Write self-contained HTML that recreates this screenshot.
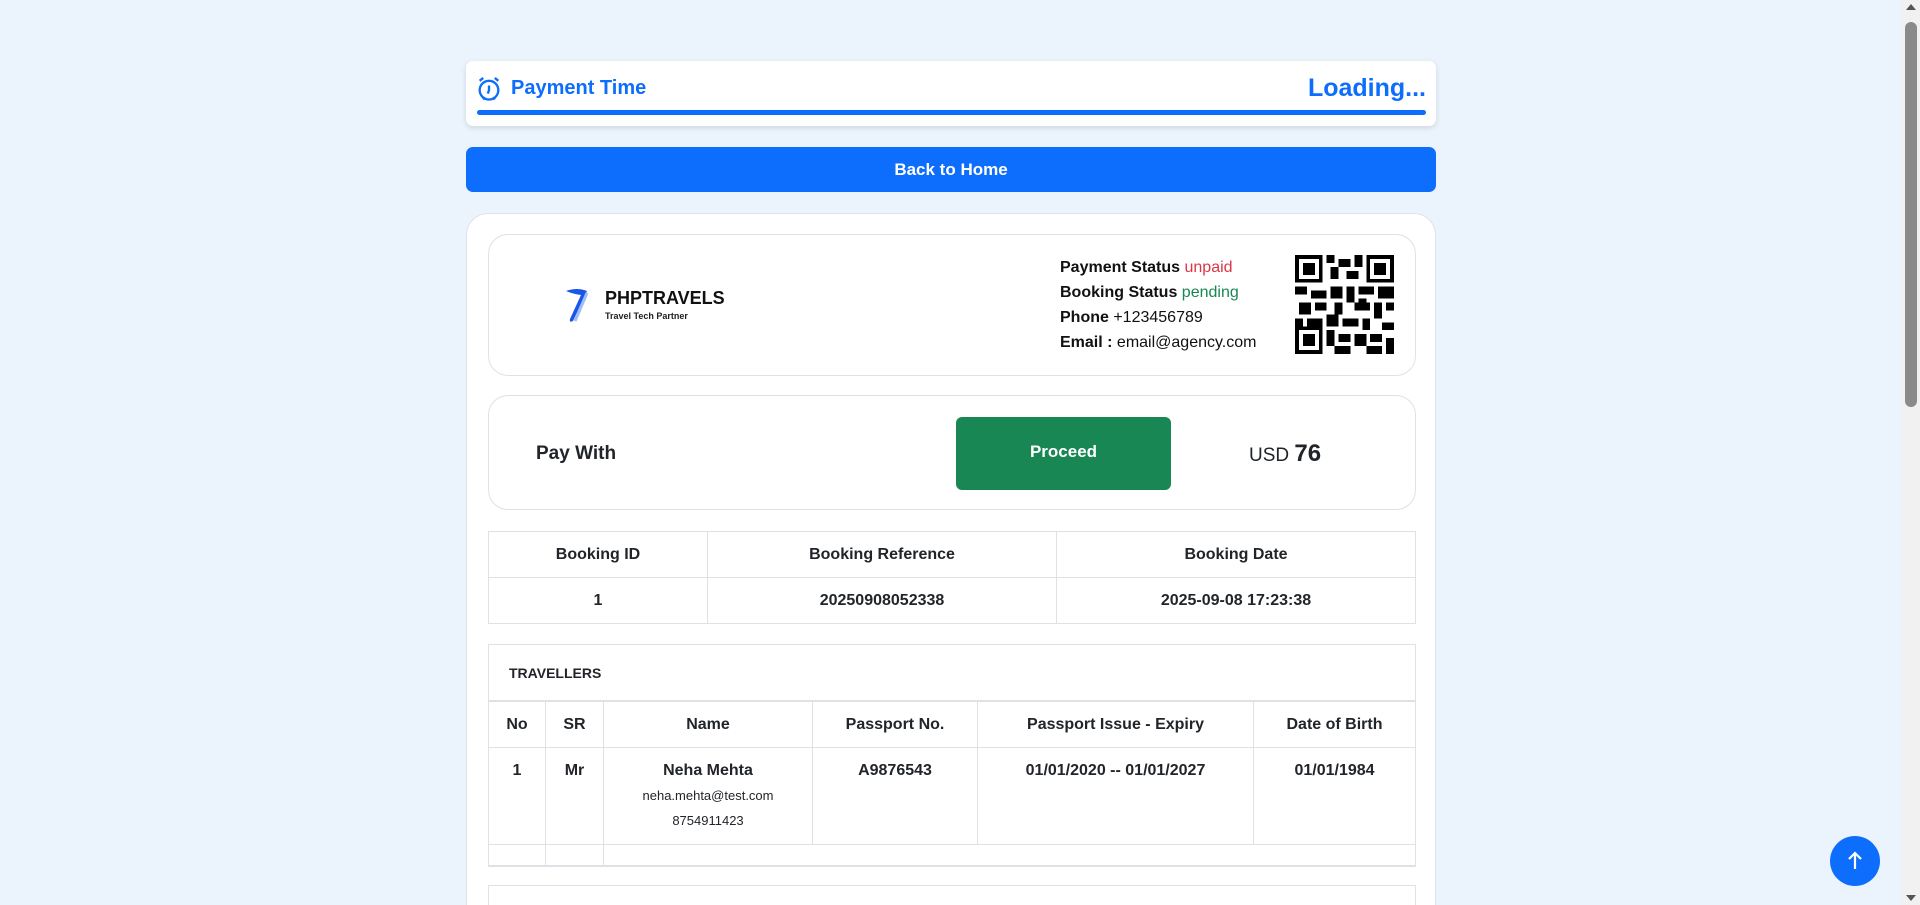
<!DOCTYPE html>
<html><head><meta charset="utf-8"><style>
*{box-sizing:border-box;margin:0;padding:0}
html,body{width:1920px;height:905px;overflow:hidden}
body{background:#ebf3fc;font-family:"Liberation Sans",Arial,sans-serif;color:#212529}
#wrap{position:relative;width:1920px;height:905px;overflow:hidden}
.abs{position:absolute}
.timer{left:466px;top:61px;width:970px;height:65px;background:#fff;border-radius:7px;box-shadow:0 2px 6px rgba(0,0,0,.12)}
.timer .t{left:45px;top:16px;font-size:20px;font-weight:bold;color:#0d6efd}
.timer .l{right:10px;top:13px;font-size:25px;font-weight:bold;color:#0d6efd}
.timer .bar{left:11px;right:10px;top:49px;height:5px;background:#0d6efd;border-radius:3px}
.back{left:466px;top:147px;width:970px;height:45px;background:#0d6efd;border-radius:7px;color:#fff;font-weight:bold;font-size:17px;text-align:center;line-height:45px}
.main{left:466px;top:213px;width:970px;height:760px;background:#fff;border-radius:22px;border:1px solid #dde3ea}
.box{position:absolute;left:21px;width:928px;border:1px solid #dee2e6;border-radius:20px;background:#fff}
table{border-collapse:collapse;width:100%}
td,th{border:1px solid #dee2e6;text-align:center;font-size:16px;font-weight:bold}
</style></head><body><div id="wrap">
<div class="abs timer">
 <svg class="abs" style="left:9px;top:14px" width="28" height="28" viewBox="0 0 24 24" fill="none" stroke="#0d6efd" stroke-width="2"><circle cx="12" cy="13" r="8"/><path d="M12 9v4l-1 3M4 5l3-2.5M20 5l-3-2.5M7 21l1.5-2M17 21l-1.5-2"/></svg>
 <div class="abs t">Payment Time</div><div class="abs l">Loading...</div><div class="abs bar"></div>
</div>
<div class="abs back">Back to Home</div>
<div class="abs main">
 <div class="box" style="top:20px;height:142px">
  <svg class="abs" style="left:74px;top:52px" width="30" height="38" viewBox="0 0 30 38"><path d="M3 4 Q14 0 24 4 L10 34 Q6 36 7 32 L18 8 Q10 7 3 4Z" fill="#1a56e8"/><path d="M12 34 L24 6" stroke="#9ec0f7" stroke-width="3"/></svg>
  <div class="abs" style="left:116px;top:53px;font-size:18px;font-weight:bold;color:#111">PHPTRAVELS</div>
  <div class="abs" style="left:116px;top:76px;font-size:9px;font-weight:bold;color:#222">Travel Tech Partner</div>
  <div class="abs" style="left:571px;top:20px;font-size:16px;line-height:25px;color:#111">
   <div><b>Payment Status</b> <span style="color:#dc3545">unpaid</span></div>
   <div><b>Booking Status</b> <span style="color:#198754">pending</span></div>
   <div><b>Phone</b> +123456789</div>
   <div><b>Email :</b> email@agency.com</div>
  </div>
  <svg class="abs" style="left:806px;top:20px" width="99" height="99" viewBox="0 0 25 25" shape-rendering="crispEdges">
   <g fill="#000"><path d="M0 0h7v7H0zM18 0h7v7h-7zM0 18h7v7H0z"/></g>
   <g fill="#fff"><path d="M1 1h5v5H1zM19 1h5v5h-5zM1 19h5v5H1z"/></g>
   <g fill="#000"><path d="M2 2h3v3H2zM20 2h3v3h-3zM2 20h3v3H2zM8 0h2v2H8zM11 1h3v2h-3zM9 3h2v3H9zM13 4h3v2h-3zM15 0h2v3h-2zM0 8h3v2H0zM4 9h4v2H4zM9 8h3v3H9zM13 8h2v4h-2zM16 8h4v2h-4zM21 8h4v3h-4zM1 12h3v3H1zM5 12h3v2H5zM10 12h2v3h-2zM15 12h4v2h-4zM20 12h2v4h-2zM23 12h2v2h-2zM0 16h2v2H0zM3 16h4v2H3zM8 15h3v3H8zM12 16h4v2h-4zM17 16h2v3h-2zM22 17h3v2h-3zM8 19h2v4H8zM11 20h3v2h-3zM15 20h3v3h-3zM19 20h3v2h-3zM23 21h2v4h-2zM10 23h4v2h-4zM18 23h4v2h-4zM16 11h2v1h-2z"/></g>
  </svg>
 </div>
 <div class="box" style="top:181px;height:115px">
  <div class="abs" style="left:47px;top:47px;font-size:19px;font-weight:bold">Pay With</div>
  <div class="abs" style="left:467px;top:21px;width:215px;height:73px;background:#198754;border-radius:6px;color:#fff;font-weight:bold;font-size:17px;text-align:center;line-height:70px">Proceed</div>
  <div class="abs" style="left:760px;top:44px;font-size:19px">USD <b style="font-size:24px">76</b></div>
 </div>
 <div class="abs" style="left:21px;top:317px;width:928px">
  <table><tr style="height:46px"><td style="width:219px">Booking ID</td><td style="width:349px">Booking Reference</td><td>Booking Date</td></tr>
  <tr style="height:46px"><td>1</td><td>20250908052338</td><td>2025-09-08 17:23:38</td></tr></table>
 </div>
 <div class="abs" style="left:21px;top:430px;width:928px;border:1px solid #dee2e6">
  <div style="height:57px;padding:20px 0 0 20px;font-size:14px;font-weight:bold;border-bottom:2px solid #dee2e6">TRAVELLERS</div>
  <table style="margin:-1px -1px 0 -1px;width:928px"><tr style="height:46px"><td style="width:57px">No</td><td style="width:58px">SR</td><td style="width:209px">Name</td><td style="width:165px">Passport No.</td><td style="width:276px">Passport Issue - Expiry</td><td>Date of Birth</td></tr>
  <tr style="height:97px;vertical-align:top"><td style="padding-top:14px">1</td><td style="padding-top:14px">Mr</td><td style="padding-top:14px">Neha Mehta<div style="font-weight:normal;font-size:13px;margin-top:8px">neha.mehta@test.com</div><div style="font-weight:normal;font-size:13px;margin-top:10px">8754911423</div></td><td style="padding-top:14px">A9876543</td><td style="padding-top:14px">01/01/2020 -- 01/01/2027</td><td style="padding-top:14px">01/01/1984</td></tr>
  <tr style="height:21px"><td></td><td></td><td colspan="4" style="border-right:none"></td></tr></table>
 </div>
 <div class="abs" style="left:21px;top:671px;width:928px;height:60px;border:1px solid #dee2e6"></div>
</div>
<div class="abs" style="left:1902px;top:0;width:18px;height:905px;background:#f1f1f1"></div>
<div class="abs" style="left:1905px;top:22px;width:12px;height:385px;background:#8a8a8a;border-radius:6px"></div>
<div class="abs" style="left:1906px;top:4px;width:0;height:0;border-left:5px solid transparent;border-right:5px solid transparent;border-bottom:6px solid #555"></div>
<div class="abs" style="left:1906px;top:895px;width:0;height:0;border-left:5px solid transparent;border-right:5px solid transparent;border-top:6px solid #555"></div>
<div class="abs" style="left:1830px;top:836px;width:50px;height:50px;border-radius:50%;background:#0d6efd">
 <svg width="50" height="50" viewBox="0 0 50 50" fill="none" stroke="#fff" stroke-width="2.2"><path d="M25 33V17M19 23l6-6 6 6"/></svg>
</div>
</div></body></html>
